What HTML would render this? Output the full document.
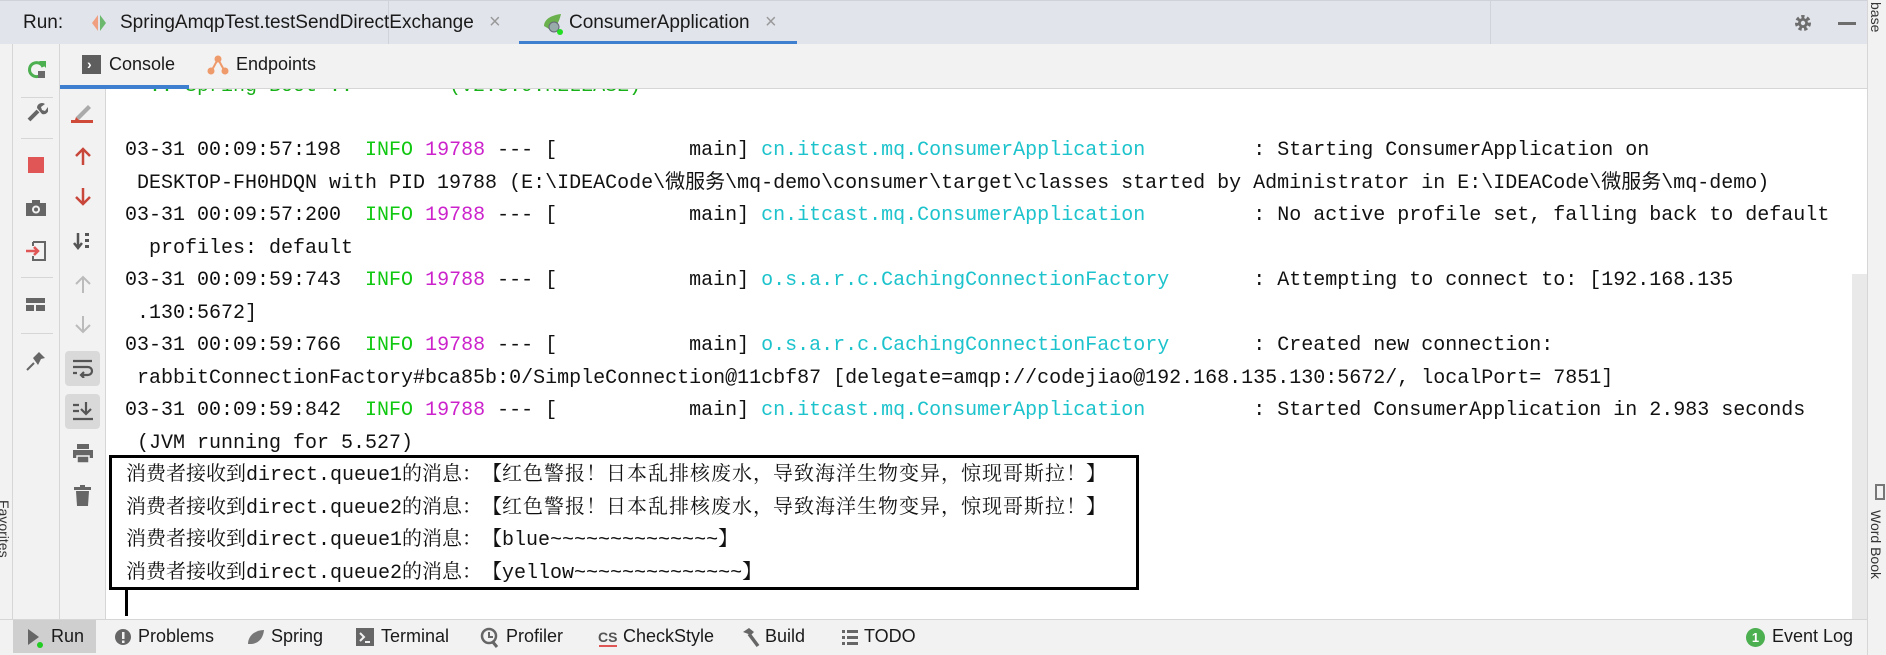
<!DOCTYPE html>
<html><head><meta charset="utf-8"><style>
*{margin:0;padding:0;box-sizing:border-box}
body{width:1886px;height:655px;overflow:hidden;background:#fff;position:relative;font-family:"Liberation Sans","Noto Sans CJK SC",sans-serif}
.abs{position:absolute}
.mono{font-family:"Liberation Mono","Noto Sans CJK SC",monospace;font-size:20px;line-height:32px;white-space:pre;color:#111}
.g{color:#10c810}.m{color:#cc22cc}.c{color:#1cc3cc}
.cn{font-family:"Liberation Mono","Noto Serif CJK SC",serif;font-size:20px;line-height:32px;white-space:pre;color:#111}
.p{display:inline-block;width:20px;text-align:left}
.pc{display:inline-block;width:20px;text-align:center}
.ls{letter-spacing:1px}
.ui{font-size:18px;color:#1a1a1a;white-space:nowrap}
</style></head><body>
<!-- console text -->
<div class="abs mono" style="left:125px;top:71px;color:#18b018">  :: Spring Boot ::        (v2.3.9.RELEASE)</div>
<div class="abs mono" style="left:125px;top:135px">03-31 00:09:57:198  <span class="g">INFO</span> <span class="m">19788</span> --- [           main] <span class="c">cn.itcast.mq.ConsumerApplication</span>         : Starting ConsumerApplication on</div>
<div class="abs mono" style="left:125px;top:167.5px"> DESKTOP-FH0HDQN with PID 19788 (E:\IDEACode\微服务\mq-demo\consumer\target\classes started by Administrator in E:\IDEACode\微服务\mq-demo)</div>
<div class="abs mono" style="left:125px;top:200px">03-31 00:09:57:200  <span class="g">INFO</span> <span class="m">19788</span> --- [           main] <span class="c">cn.itcast.mq.ConsumerApplication</span>         : No active profile set, falling back to default</div>
<div class="abs mono" style="left:125px;top:232.5px">  profiles: default</div>
<div class="abs mono" style="left:125px;top:265px">03-31 00:09:59:743  <span class="g">INFO</span> <span class="m">19788</span> --- [           main] <span class="c">o.s.a.r.c.CachingConnectionFactory</span>       : Attempting to connect to: [192.168.135</div>
<div class="abs mono" style="left:125px;top:297.5px"> .130:5672]</div>
<div class="abs mono" style="left:125px;top:330px">03-31 00:09:59:766  <span class="g">INFO</span> <span class="m">19788</span> --- [           main] <span class="c">o.s.a.r.c.CachingConnectionFactory</span>       : Created new connection:</div>
<div class="abs mono" style="left:125px;top:362.5px"> rabbitConnectionFactory#bca85b:0/SimpleConnection@11cbf87 [delegate=amqp://codejiao@192.168.135.130:5672/, localPort= 7851]</div>
<div class="abs mono" style="left:125px;top:395px">03-31 00:09:59:842  <span class="g">INFO</span> <span class="m">19788</span> --- [           main] <span class="c">cn.itcast.mq.ConsumerApplication</span>         : Started ConsumerApplication in 2.983 seconds</div>
<div class="abs mono" style="left:125px;top:427.5px"> (JVM running for 5.527)</div>
<div class="abs cn" style="left:126px;top:460px">消费者接收到direct.queue1的消息<span class="p">：</span><span class="pc">【</span><span class="ls">红色警报<span class="p">！</span>日本乱排核废水<span class="p">，</span>导致海洋生物变异<span class="p">，</span>惊现哥斯拉<span class="p">！</span></span><span class="pc">】</span></div>
<div class="abs cn" style="left:126px;top:492.5px">消费者接收到direct.queue2的消息<span class="p">：</span><span class="pc">【</span><span class="ls">红色警报<span class="p">！</span>日本乱排核废水<span class="p">，</span>导致海洋生物变异<span class="p">，</span>惊现哥斯拉<span class="p">！</span></span><span class="pc">】</span></div>
<div class="abs cn" style="left:126px;top:525px">消费者接收到direct.queue1的消息<span class="p">：</span><span class="pc">【</span>blue~~~~~~~~~~~~~~<span class="pc">】</span></div>
<div class="abs cn" style="left:126px;top:557.5px">消费者接收到direct.queue2的消息<span class="p">：</span><span class="pc">【</span>yellow~~~~~~~~~~~~~~<span class="pc">】</span></div>
<div class="abs" style="left:109px;top:455px;width:1030px;height:135px;border:3px solid #000"></div>
<div class="abs" style="left:125px;top:589px;width:3px;height:27px;background:#000"></div>
<!-- scrollbar -->
<div class="abs" style="left:1852px;top:274px;width:15px;height:345px;background:#e9e9e9"></div>
<!-- top tab bar -->
<div class="abs" style="left:0;top:0;width:1867px;height:44px;background:#e1e4eb;border-top:1px solid #cfd2d8"></div>
<div class="abs" style="left:388px;top:0;width:1px;height:44px;background:#d0d3d9"></div>
<div class="abs" style="left:1490px;top:0;width:1px;height:44px;background:#d0d3d9"></div>
<div class="abs ui" style="left:23px;top:12px;font-size:19px">Run:</div>
<svg class="abs" style="left:91px;top:14px" width="16" height="18"><path d="M7 1L1 9l6 8z" fill="#f0a080"/><path d="M9 1l6 8-6 8z" fill="#6cb86c"/></svg>
<div class="abs ui" style="left:120px;top:12px;font-size:19px">SpringAmqpTest.testSendDirectExchange</div>
<div class="abs ui" style="left:489px;top:11px;font-size:20px;color:#999">×</div>
<svg class="abs" style="left:541px;top:12px" width="24" height="24"><path d="M3 14c0-7 8-11 17-12-2 8-5 15-12 15z" fill="#6ab04c"/><circle cx="13" cy="15" r="5" fill="#9aa" stroke="#667" /><circle cx="19" cy="20" r="3" fill="#2d2"/></svg>
<div class="abs ui" style="left:569px;top:12px;font-size:19px">ConsumerApplication</div>
<div class="abs ui" style="left:765px;top:11px;font-size:20px;color:#999">×</div>
<div class="abs" style="left:519px;top:41px;width:278px;height:4px;background:#3f7fcf"></div>
<svg class="abs" style="left:1793px;top:13px" width="20" height="20"><circle cx="10" cy="10" r="6" fill="none" stroke="#6d6d6d" stroke-width="4" stroke-dasharray="3 2.3"/><circle cx="10" cy="10" r="5" fill="#6d6d6d"/><circle cx="10" cy="10" r="2.2" fill="#e1e4eb"/></svg>
<div class="abs" style="left:1838px;top:22px;width:18px;height:3px;background:#6d6d6d"></div>
<!-- right sidebar -->
<div class="abs" style="left:1867px;top:0;width:19px;height:655px;background:#f2f2f2;border-left:1px solid #d6d6d6"></div>
<div class="abs" style="top:2px;font-size:14px;color:#333;transform:rotate(90deg);transform-origin:left top;left:1884px">base</div>
<div class="abs" style="left:1884px;top:510px;font-size:14px;color:#333;transform:rotate(90deg);transform-origin:left top;white-space:nowrap">Word Book</div>
<div class="abs" style="left:1875px;top:484px;width:10px;height:16px;border:2px solid #777"></div>
<!-- second row -->
<div class="abs" style="left:60px;top:44px;width:1807px;height:45px;background:#f2f2f2;border-bottom:1px solid #d6d6d6"></div>
<div class="abs" style="left:82px;top:55px;width:19px;height:19px;background:#5e5e5e"></div>
<div class="abs" style="left:87px;top:56px;color:#fff;font-size:14px;font-weight:bold">›</div>
<div class="abs ui" style="left:109px;top:54px">Console</div>
<svg class="abs" style="left:206px;top:54px" width="24" height="22"><path d="M6 16L12 5l6 11" stroke="#ef9a6a" stroke-width="2" fill="none"/><circle cx="12" cy="5" r="3.5" fill="#ef9a6a"/><circle cx="5" cy="17" r="3.5" fill="#ef9a6a"/><circle cx="19" cy="17" r="3.5" fill="#ef9a6a"/></svg>
<div class="abs ui" style="left:236px;top:54px">Endpoints</div>
<div class="abs" style="left:60px;top:85px;width:129px;height:4px;background:#3f7fcf"></div>
<!-- left toolbar -->
<div class="abs" style="left:0;top:44px;width:13px;height:576px;background:#f2f2f2;border-right:1px solid #d6d6d6"></div>
<div class="abs" style="top:500px;font-size:14px;color:#333;transform:rotate(90deg);transform-origin:left top;left:12px;white-space:nowrap">Favorites</div>
<div class="abs" style="left:13px;top:44px;width:47px;height:576px;background:#f2f2f2;border-right:1px solid #d6d6d6"></div>
<div class="abs" style="left:60px;top:89px;width:46px;height:531px;background:#f2f2f2;border-right:1px solid #d6d6d6"></div>
<!-- left col icons -->
<svg class="abs" style="left:26px;top:58px" width="22" height="22"><path d="M17 9a7 7 0 1 0-1 7" stroke="#4caf50" stroke-width="3" fill="none"/><path d="M13 3h7v7z" fill="#4caf50"/><rect x="12" y="13" width="7" height="7" fill="#6a6a6a"/></svg>
<svg class="abs" style="left:26px;top:101px" width="22" height="22"><path d="M3 19l9-9" stroke="#666" stroke-width="4"/><path d="M11 7a5 5 0 0 1 8-4l-4 3 1 3 3 1 3-4a5 5 0 0 1-6 7z" fill="#666"/></svg>
<div class="abs" style="left:21px;top:97px;width:32px;height:1px;background:#d6d6d6"></div>
<div class="abs" style="left:21px;top:138px;width:32px;height:1px;background:#d6d6d6"></div>
<div class="abs" style="left:28px;top:157px;width:16px;height:16px;background:#e05555"></div>
<svg class="abs" style="left:25px;top:199px" width="22" height="18"><rect x="1" y="4" width="20" height="13" fill="#666"/><rect x="7" y="1" width="8" height="4" fill="#666"/><circle cx="11" cy="10.5" r="4" fill="#f2f2f2"/><circle cx="11" cy="10.5" r="2" fill="#666"/></svg>
<svg class="abs" style="left:25px;top:240px" width="22" height="22"><path d="M8 2h12v18H8v-4M8 6V2" stroke="#666" stroke-width="2" fill="none"/><path d="M1 11h11M9 7l4 4-4 4" stroke="#e05555" stroke-width="2.5" fill="none"/></svg>
<div class="abs" style="left:21px;top:277px;width:32px;height:1px;background:#d6d6d6"></div>
<svg class="abs" style="left:26px;top:298px" width="20" height="14"><rect x="0" y="0" width="19" height="5" fill="#666"/><rect x="0" y="7" width="8" height="6" fill="#666"/><rect x="10" y="7" width="9" height="6" fill="#666"/></svg>
<div class="abs" style="left:21px;top:333px;width:32px;height:1px;background:#d6d6d6"></div>
<svg class="abs" style="left:25px;top:350px" width="22" height="22"><path d="M2 20l7-7" stroke="#666" stroke-width="2"/><path d="M8 8l6-6 6 6-4 1-3 6z" fill="#666"/></svg>
<!-- second col icons -->
<svg class="abs" style="left:70px;top:102px" width="26" height="22"><path d="M6 15L18 3l3 3-12 12z" fill="#aaa"/><path d="M6 15l3 3-4 0z" fill="#d04a3a"/><rect x="1" y="18" width="22" height="3" fill="#d04a3a"/></svg>
<svg class="abs" style="left:74px;top:146px" width="18" height="20"><path d="M9 19V3M2 10l7-7 7 7" stroke="#c8463a" stroke-width="2.5" fill="none"/></svg>
<svg class="abs" style="left:74px;top:187px" width="18" height="20"><path d="M9 1v16M2 10l7 7 7-7" stroke="#c8463a" stroke-width="2.5" fill="none"/></svg>
<svg class="abs" style="left:73px;top:231px" width="20" height="20"><path d="M5 2v14M1 12l4 5 4-5" stroke="#555" stroke-width="2.5" fill="none"/><rect x="12" y="2" width="4" height="3" fill="#555"/><rect x="12" y="8" width="4" height="3" fill="#555"/><rect x="12" y="14" width="4" height="3" fill="#555"/></svg>
<svg class="abs" style="left:74px;top:274px" width="18" height="20"><path d="M9 19V3M2 10l7-7 7 7" stroke="#bbb" stroke-width="2" fill="none"/></svg>
<svg class="abs" style="left:74px;top:315px" width="18" height="20"><path d="M9 1v16M2 10l7 7 7-7" stroke="#bbb" stroke-width="2" fill="none"/></svg>
<div class="abs" style="left:65px;top:351px;width:35px;height:35px;background:#d9d9d9;border-radius:4px"></div>
<svg class="abs" style="left:72px;top:358px" width="22" height="20"><path d="M1 3h19M1 9h15a4 4 0 0 1 0 8h-6M12 14l-3 3 3 3M1 15h4" stroke="#555" stroke-width="2.2" fill="none"/></svg>
<div class="abs" style="left:65px;top:394px;width:35px;height:35px;background:#d9d9d9;border-radius:4px"></div>
<svg class="abs" style="left:72px;top:400px" width="22" height="22"><path d="M1 5h6M1 11h6M1 19h20M14 2v12M9 9l5 5 5-5" stroke="#555" stroke-width="2.2" fill="none"/></svg>
<svg class="abs" style="left:72px;top:444px" width="22" height="20"><rect x="5" y="0" width="12" height="5" fill="#666"/><rect x="1" y="6" width="20" height="8" fill="#666"/><rect x="5" y="12" width="12" height="7" fill="#666" stroke="#f2f2f2" stroke-width="1.5"/></svg>
<svg class="abs" style="left:74px;top:485px" width="18" height="22"><rect x="0" y="2" width="17" height="3" fill="#666"/><rect x="6" y="0" width="5" height="3" fill="#666"/><path d="M2 6h13l-1 15H3z" fill="#666"/></svg>
<!-- bottom bar -->
<div class="abs" style="left:0;top:619px;width:1867px;height:36px;background:#f2f2f2;border-top:1px solid #d6d6d6"></div>
<div class="abs" style="left:13px;top:620px;width:83px;height:33px;background:#cfcfcf"></div>
<svg class="abs" style="left:27px;top:628px" width="16" height="20"><path d="M1 1l11 8-11 8z" fill="#666"/><circle cx="13" cy="17" r="3" fill="#2c2"/></svg>
<div class="abs ui" style="left:51px;top:626px">Run</div>
<svg class="abs" style="left:114px;top:628px" width="18" height="18"><circle cx="9" cy="9" r="8" fill="#666"/><rect x="8" y="4" width="2.5" height="7" fill="#f2f2f2"/><rect x="8" y="12.5" width="2.5" height="2.5" fill="#f2f2f2"/></svg>
<div class="abs ui" style="left:138px;top:626px">Problems</div>
<svg class="abs" style="left:246px;top:628px" width="20" height="18"><path d="M2 16C2 8 9 2 18 2c-1 9-6 14-14 14z" fill="#777"/></svg>
<div class="abs ui" style="left:271px;top:626px">Spring</div>
<svg class="abs" style="left:356px;top:628px" width="18" height="18"><rect x="0" y="0" width="18" height="18" fill="#666"/><path d="M4 5l4 4-4 4" stroke="#f2f2f2" stroke-width="2" fill="none"/><rect x="9" y="13" width="5" height="2" fill="#f2f2f2"/></svg>
<div class="abs ui" style="left:381px;top:626px">Terminal</div>
<svg class="abs" style="left:480px;top:627px" width="20" height="22"><circle cx="9" cy="9" r="7" stroke="#666" stroke-width="2.5" fill="none"/><path d="M9 5v5h4" stroke="#666" stroke-width="2" fill="none"/><path d="M12 14l5 6" stroke="#666" stroke-width="3"/></svg>
<div class="abs ui" style="left:506px;top:626px">Profiler</div>
<div class="abs" style="left:598px;top:629px;font-size:14px;font-weight:bold;color:#555">CS</div>
<div class="abs" style="left:599px;top:645px;width:18px;height:2px;background:#e05555"></div>
<div class="abs ui" style="left:623px;top:626px">CheckStyle</div>
<svg class="abs" style="left:741px;top:627px" width="20" height="22"><path d="M2 5l6-4 5 4-3 3z" fill="#666"/><path d="M8 7l9 12" stroke="#666" stroke-width="3.5"/></svg>
<div class="abs ui" style="left:765px;top:626px">Build</div>
<svg class="abs" style="left:842px;top:629px" width="16" height="16"><g fill="#666"><rect x="0" y="1" width="3" height="3"/><rect x="5" y="1" width="11" height="3"/><rect x="0" y="7" width="3" height="3"/><rect x="5" y="7" width="11" height="3"/><rect x="0" y="13" width="3" height="3"/><rect x="5" y="13" width="11" height="3"/></g></svg>
<div class="abs ui" style="left:864px;top:626px">TODO</div>
<div class="abs" style="left:1746px;top:628px;width:19px;height:19px;border-radius:50%;background:#4caf50;color:#fff;font-size:13px;text-align:center;line-height:19px;font-weight:bold">1</div>
<div class="abs ui" style="left:1772px;top:626px">Event Log</div>
</body></html>
